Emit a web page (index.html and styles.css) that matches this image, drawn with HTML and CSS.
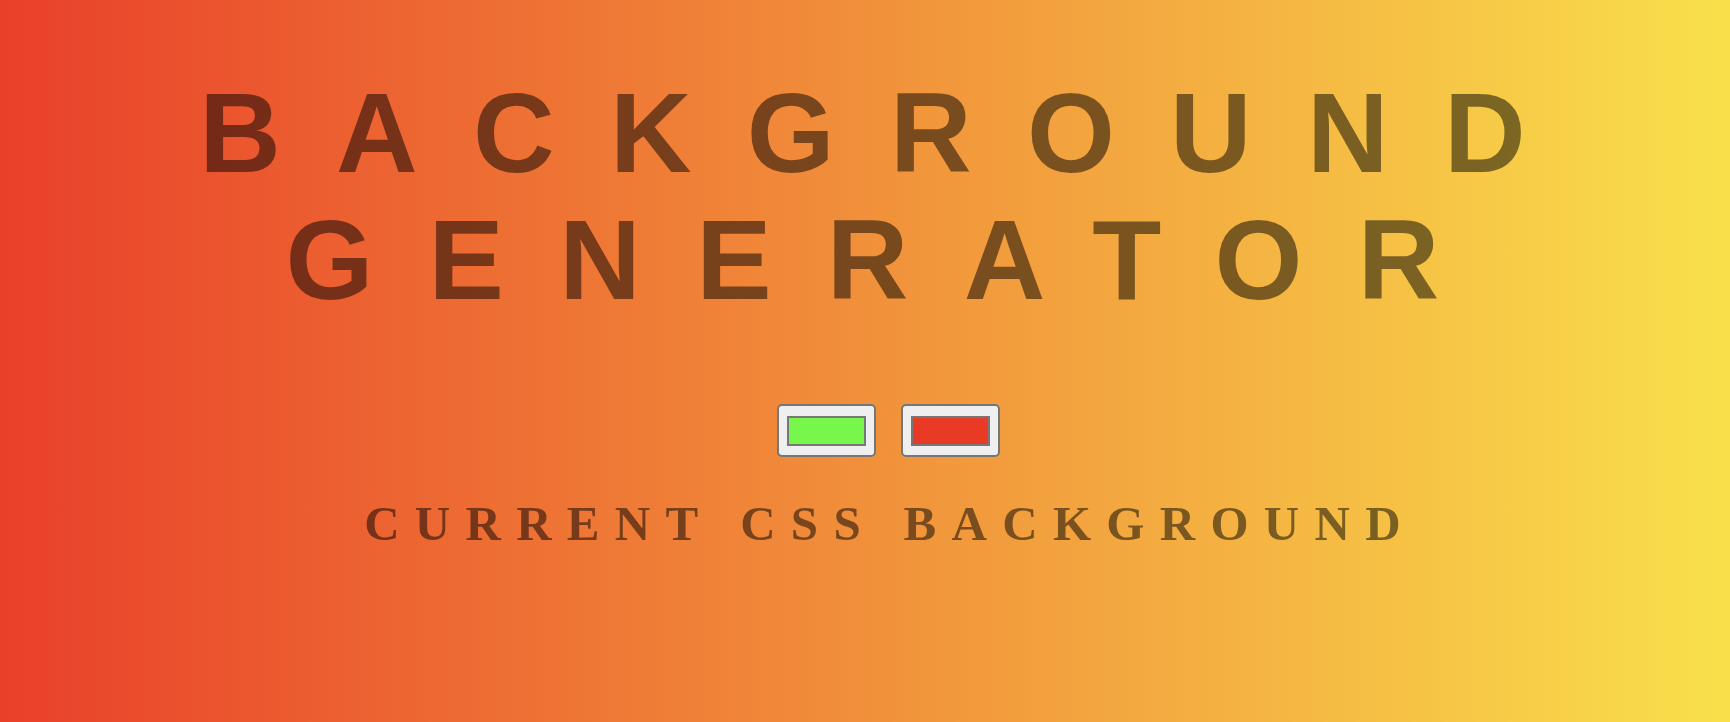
FILE: index.html
```html
<!DOCTYPE html>
<html lang="en">
<head>
<meta charset="utf-8">
<title>Background Generator</title>
<link rel="stylesheet" href="styles.css">
</head>
<body>
<main class="page">
  <h1 class="title">Background Generator</h1>
  <div class="pickers">
    <div class="picker"><span class="swatch swatch-green"></span></div>
    <div class="picker"><span class="swatch swatch-red"></span></div>
  </div>
  <h3 class="subtitle">Current CSS Background</h3>
</main>
</body>
</html>
```
FILE: styles.css
```css
html, body {
  margin: 0;
  height: 100%;
}

body {
  background: linear-gradient(to right, #e9402a, #f9e04b);
  min-height: 722px;
  overflow: hidden;
}

.page {
  padding: 70px 0 0 50px;
  text-align: center;
  color: rgba(0, 0, 0, 0.5);
}

.title {
  margin: 0;
  font-family: "Liberation Sans", Arial, sans-serif;
  font-weight: bold;
  font-size: 113px;
  line-height: 126.6px;
  letter-spacing: 55.3px;
  text-transform: uppercase;
}

.pickers {
  margin-top: 81px;
  display: flex;
  justify-content: center;
  gap: 25px;
  padding-right: 4px;
}

.picker {
  box-sizing: border-box;
  width: 99px;
  height: 53px;
  border: 2px solid #767676;
  border-radius: 5px;
  background: #efefef;
  display: flex;
  align-items: center;
  justify-content: center;
}

.swatch {
  box-sizing: border-box;
  display: block;
  width: 79px;
  height: 30px;
  border: 2px solid #777777;
}

.swatch-green { background: #77f74b; }
.swatch-red { background: #e93a26; }

.subtitle {
  margin: 39px 0 0;
  font-family: "Liberation Serif", "Times New Roman", serif;
  font-weight: bold;
  font-size: 49px;
  line-height: 56px;
  letter-spacing: 15.3px;
  text-transform: uppercase;
}
```
